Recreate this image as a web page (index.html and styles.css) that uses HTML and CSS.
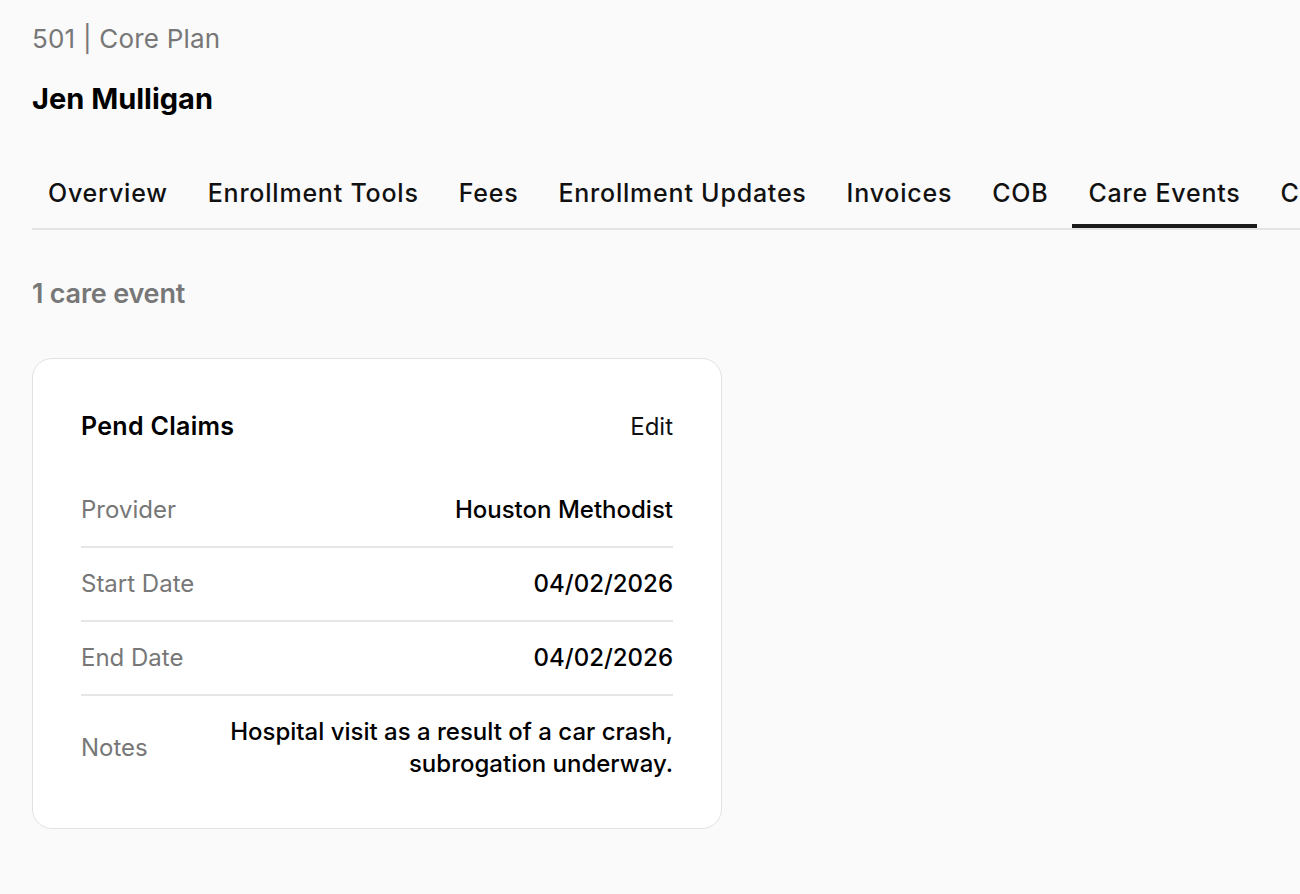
FILE: index.html
```html
<!DOCTYPE html>
<html lang="en">
<head>
<meta charset="utf-8">
<title>Jen Mulligan – Care Events</title>
<link rel="stylesheet" href="styles.css">
</head>
<body>
<main class="page">
  <header class="member-header">
    <div class="plan-line">501 | Core Plan</div>
    <h1 class="member-name">Jen Mulligan</h1>
  </header>

  <nav class="tabs">
    <a class="tab">Overview</a>
    <a class="tab">Enrollment Tools</a>
    <a class="tab">Fees</a>
    <a class="tab">Enrollment Updates</a>
    <a class="tab">Invoices</a>
    <a class="tab">COB</a>
    <a class="tab tab-active">Care Events</a>
    <a class="tab">Claims</a>
    <a class="tab">Documents</a>
  </nav>

  <section class="events">
    <div class="events-count">1 care event</div>

    <article class="event-card">
      <div class="event-head">
        <h2 class="event-title">Pend Claims</h2>
        <a class="event-edit">Edit</a>
      </div>
      <dl class="event-fields">
        <div class="field">
          <dt class="field-label">Provider</dt>
          <dd class="field-value">Houston Methodist</dd>
        </div>
        <div class="field">
          <dt class="field-label">Start Date</dt>
          <dd class="field-value">04/02/2026</dd>
        </div>
        <div class="field">
          <dt class="field-label">End Date</dt>
          <dd class="field-value">04/02/2026</dd>
        </div>
        <div class="field">
          <dt class="field-label">Notes</dt>
          <dd class="field-value">Hospital visit as a result of a car crash,<br>subrogation underway.</dd>
        </div>
      </dl>
    </article>
  </section>
</main>
</body>
</html>
```

FILE: styles.css
```css
* {
  box-sizing: border-box;
}

html, body {
  margin: 0;
  background: #fafafa;
}

body {
  font-family: Inter, "Noto Sans", "Liberation Sans", sans-serif;
  color: #111;
  overflow: hidden;
}

.page {
  padding: 24px 0 0 32px;
}

.plan-line {
  font-size: 26px;
  line-height: 30px;
  color: #777;
  letter-spacing: 0.2px;
}

.member-name {
  margin: 30px 0 0;
  font-size: 29px;
  line-height: 30px;
  font-weight: 700;
  color: #000;
  letter-spacing: 0;
}

/* tab strip: the active tab's bar sits right on top of the grey rule */
.tabs {
  display: flex;
  gap: 8px;
  margin-top: 48px;
  border-bottom: 2px solid #e4e4e4;
  white-space: nowrap;
  overflow: hidden;
}

.tab {
  flex: none;
  padding: 0 16px;
  height: 66px;
  display: flex;
  align-items: center;
  font-size: 25px;
  font-weight: 500;
  color: #111;
  letter-spacing: 0.78px;
  border-bottom: 4px solid transparent;
}

.tab-active {
  border-bottom-color: #1a1a1a;
}

.events-count {
  margin-top: 49px;
  font-size: 27px;
  line-height: 30px;
  font-weight: 600;
  color: #777;
  letter-spacing: -0.2px;
}

.event-card {
  width: 690px;
  margin-top: 49px;
  background: #fff;
  border: 1.5px solid #e2e2e2;
  border-radius: 20px;
  padding: 47px 48px 28px;
}

.event-head {
  display: flex;
  justify-content: space-between;
  align-items: center;
  height: 40px;
  margin-bottom: 28px;
}

.event-title {
  margin: 0;
  font-size: 25px;
  font-weight: 600;
  color: #000;
  letter-spacing: 0.3px;
}

.event-edit {
  font-size: 24px;
  color: #111;
}

.event-fields {
  margin: 0;
}

.field {
  display: flex;
  justify-content: space-between;
  align-items: center;
  gap: 24px;
  padding: 20px 0;
  border-bottom: 2px solid #e6e6e6;
}

.field:last-child {
  border-bottom: none;
}

.field-label {
  font-size: 24px;
  line-height: 32px;
  color: #777;
}

.field-value {
  margin: 0;
  font-size: 24px;
  line-height: 32px;
  font-weight: 500;
  color: #000;
  text-align: right;
}
```
